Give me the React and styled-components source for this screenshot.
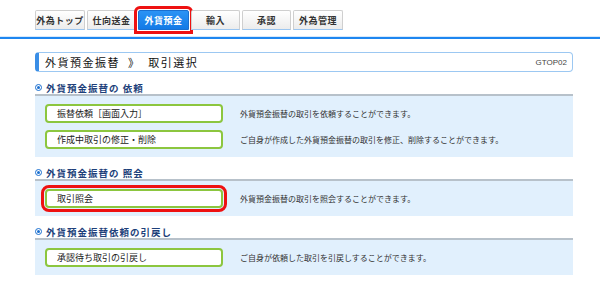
import React from "react";
import styled, { createGlobalStyle } from "styled-components";

const GlobalStyle = createGlobalStyle`
  body {
    margin: 0;
    background: #ffffff;
    font-family: "Noto Sans CJK JP", "Liberation Sans", sans-serif;
    color: #333333;
  }
`;

const Page = styled.div`
  width: 600px;
  height: 287px;
  overflow: hidden;
`;

const TabBar = styled.nav`
  display: flex;
  gap: 2px;
  padding: 10px 0 0 35px;
  height: 27px;
  border-bottom: 2px solid #1e86f0;
  box-shadow: 0 -1px 0 #d6e9fc inset;
  box-sizing: content-box;
`;

const Tab = styled.div`
  width: ${(p) => p.$w || 49}px;
  height: 20px;
  box-sizing: border-box;
  display: flex;
  align-items: center;
  justify-content: center;
  font-size: 9px;
  font-weight: bold;
  letter-spacing: 0.5px;
  color: ${(p) => (p.$active ? "#ffffff" : "#333333")};
  background: ${(p) =>
    p.$active
      ? "linear-gradient(#2b93f5, #137ae6)"
      : "linear-gradient(#ffffff, #ececec)"};
  border: 1px solid ${(p) => (p.$active ? "#1a6fd0" : "#cfcfcf")};
  border-bottom: 1px solid ${(p) => (p.$active ? "#1a6fd0" : "#9cc6f0")};
  border-radius: 2px 2px 0 0;
  outline: ${(p) => (p.$active ? "3px solid #ee1111" : "none")};
  outline-offset: 1px;
`;

const Content = styled.main`
  padding: 13px 27px 0 35px;
`;

const TitleBox = styled.div`
  height: 20px;
  box-sizing: border-box;
  display: flex;
  align-items: center;
  justify-content: space-between;
  border: 1px solid #9cc8f2;
  border-left: 4px solid #3a8ee6;
  border-radius: 4px;
  padding: 0 5px 0 6px;
`;

const Title = styled.h1`
  margin: 0;
  font-size: 11px;
  font-weight: normal;
  letter-spacing: 1.5px;
  color: #111111;
  white-space: pre;
`;

const ScreenId = styled.span`
  font-family: "Liberation Sans", sans-serif;
  font-size: 8px;
  color: #444444;
`;

const SectionHead = styled.h2`
  margin: 9px 0 0;
  height: 13px;
  display: flex;
  align-items: center;
  gap: 4px;
  font-size: 9.5px;
  font-weight: bold;
  letter-spacing: 1px;
  color: #1d3f7a;
`;

const Dot = styled.span`
  width: 7px;
  height: 7px;
  border: 1.5px solid #1a6fd0;
  border-radius: 50%;
  box-sizing: border-box;
  display: flex;
  align-items: center;
  justify-content: center;
  &::after {
    content: "";
    width: 3px;
    height: 3px;
    border-radius: 50%;
    background: #1a6fd0;
  }
`;

const Panel = styled.div`
  background: #e1f0fd;
  border-top: 2px solid #b7c1ca;
  padding: 8px 0 8px 10px;
  display: flex;
  flex-direction: column;
  gap: 7px;
`;

const Row = styled.div`
  display: flex;
  align-items: center;
  gap: 17px;
`;

const ActionButton = styled.button`
  width: 178px;
  height: 19px;
  box-sizing: border-box;
  background: #ffffff;
  border: 2px solid #8cc63f;
  border-radius: 4px;
  padding: 0 0 0 10px;
  text-align: left;
  font-family: inherit;
  font-size: 9px;
  color: #222222;
  outline: ${(p) => (p.$marked ? "3px solid #ee1111" : "none")};
  outline-offset: 1px;
`;

const Desc = styled.p`
  margin: 0;
  font-size: 8px;
  color: #333333;
`;

const tabs = [
  { label: "外為トップ", w: 50 },
  { label: "仕向送金", w: 49 },
  { label: "外貨預金", w: 51, active: true },
  { label: "輸入", w: 49 },
  { label: "承認", w: 49 },
  { label: "外為管理", w: 50 },
];

const sections = [
  {
    title: "外貨預金振替の 依頼",
    rows: [
      { label: "振替依頼［画面入力］", desc: "外貨預金振替の取引を依頼することができます。" },
      { label: "作成中取引の修正・削除", desc: "ご自身が作成した外貨預金振替の取引を修正、削除することができます。" },
    ],
  },
  {
    title: "外貨預金振替の 照会",
    rows: [{ label: "取引照会", desc: "外貨預金振替の取引を照会することができます。", marked: true }],
  },
  {
    title: "外貨預金振替依頼の引戻し",
    rows: [{ label: "承認待ち取引の引戻し", desc: "ご自身が依頼した取引を引戻しすることができます。" }],
  },
];

export default function App() {
  return (
    <Page>
      <GlobalStyle />
      <TabBar>
        {tabs.map((t) => (
          <Tab key={t.label} $w={t.w} $active={t.active}>
            {t.label}
          </Tab>
        ))}
      </TabBar>
      <Content>
        <TitleBox>
          <Title>外貨預金振替  》  取引選択</Title>
          <ScreenId>GTOP02</ScreenId>
        </TitleBox>
        {sections.map((s) => (
          <section key={s.title}>
            <SectionHead>
              <Dot />
              {s.title}
            </SectionHead>
            <Panel>
              {s.rows.map((r) => (
                <Row key={r.label}>
                  <ActionButton $marked={r.marked}>{r.label}</ActionButton>
                  <Desc>{r.desc}</Desc>
                </Row>
              ))}
            </Panel>
          </section>
        ))}
      </Content>
    </Page>
  );
}
